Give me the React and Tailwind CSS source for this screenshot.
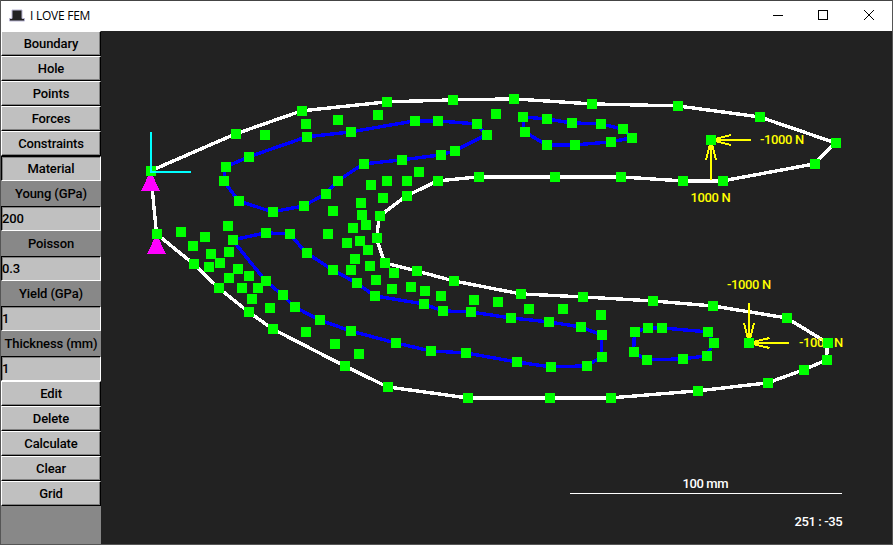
import React from 'react';

const boundary = [
  [151, 171], [236, 134], [302, 111], [387, 102], [453, 100], [514, 99], [592, 104], [678, 106], [760, 117],
  [836, 143], [815, 164], [723, 181], [683, 181], [621, 177], [555, 177], [479, 177], [438, 181], [407, 196],
  [380, 216], [377, 238], [385, 263], [417, 271], [454, 281], [521, 294], [583, 297], [653, 301], [713, 306],
  [787, 318], [828, 343], [827, 360], [804, 370], [768, 383], [698, 391], [611, 398], [550, 398], [468, 398],
  [388, 387], [345, 366], [273, 329], [249, 312], [219, 288], [194, 264], [157, 234],
];

const holes = [
  [
    [226, 167], [249, 157], [307, 137], [351, 132], [415, 121], [438, 121], [477, 124], [487, 135], [455, 151],
    [441, 155], [402, 160], [364, 164], [338, 181], [326, 194], [304, 206], [273, 212], [239, 201], [224, 181],
  ],
  [
    [523, 117], [547, 119], [572, 123], [601, 124], [623, 129], [632, 138], [611, 142], [575, 145], [547, 145],
    [525, 132],
  ],
  [
    [233, 240], [266, 233], [290, 234], [307, 253], [333, 270], [357, 283], [375, 296], [424, 304], [443, 311],
    [471, 312], [511, 318], [549, 322], [581, 327], [602, 335], [602, 357], [587, 366], [551, 367], [517, 362],
    [466, 353], [431, 351], [396, 343], [351, 331], [320, 320], [295, 307], [283, 295], [266, 281],
  ],
  [
    [635, 332], [648, 328], [662, 328], [708, 332], [714, 343], [707, 356], [683, 359], [647, 360], [634, 352],
  ],
];

const points = [
  [265, 135], [306, 124], [338, 120], [378, 115], [496, 114], [181, 232], [193, 246], [205, 237], [228, 226],
  [211, 254], [209, 267], [220, 263], [229, 252], [229, 278], [238, 269], [249, 276], [242, 288], [258, 288],
  [252, 299], [270, 308], [306, 332], [335, 344], [359, 354], [419, 172], [407, 181], [387, 181], [371, 185],
  [383, 198], [361, 203], [362, 215], [366, 225], [353, 228], [333, 211], [328, 234], [347, 243], [360, 241],
  [368, 250], [355, 259], [351, 270], [370, 266], [394, 273], [376, 280], [392, 289], [411, 287], [425, 291],
  [441, 296], [474, 300], [498, 302], [529, 309], [563, 309], [601, 315], [711, 140], [749, 343],
];

const labelFont = "font-['Roboto',sans-serif] text-[13px] font-medium tracking-[-0.12px]";

function Polygon({ nodes, color }) {
  return (
    <polygon
      points={nodes.map((n) => n.join(',')).join(' ')}
      transform="translate(-0.5 -0.1)"
      fill="none"
      stroke={color}
      strokeWidth="3.4"
      shapeRendering="crispEdges"
    />
  );
}

function Label({ x, y, width, color = '#ff0', children }) {
  return (
    <text x={x} y={y} textLength={width} fill={color} className={labelFont}>
      {children}
    </text>
  );
}

function Model() {
  return (
    <svg className="block h-full w-full" viewBox="101 31 791 513">
      <Polygon nodes={boundary} color="#fff" />
      {holes.map((h, i) => <Polygon key={i} nodes={h} color="#00f" />)}
      <path d="M150.5 171 160 191H141ZM156.500 234 166 254H147Z" fill="#f0f" shapeRendering="crispEdges" />
      <g stroke="#ff0" strokeWidth="2" fill="none" shapeRendering="crispEdges">
        <path d="M751 140H711M731 135L711 140L731 145" />
        <path d="M711 180V140M706 160L711 140L716 160" />
        <path d="M749 303V343M744 323L749 343L754 323" />
        <path d="M789 343H749M769.500 338L749 343L769.500 348" />
      </g>
      <Label x={760} y={144} width={44}>-1000 N</Label>
      <Label x={690.5} y={202} width={40}>1000 N</Label>
      <Label x={727} y={289} width={44}>-1000 N</Label>
      <Label x={799} y={347} width={44}>-1000 N</Label>
      {[...boundary, ...holes.flat(), ...points].map(([x, y], i) => (
        <rect key={i} x={x - 5} y={y - 5} width="10" height="10" fill="#0f0" />
      ))}
      <path d="M151 132V172H191" fill="none" stroke="#0ff" strokeWidth="2" />
      <Label x={682.5} y={488} width={46} color="#fff">100 mm</Label>
      <path d="M570 493.500H842" stroke="#fff" />
      <Label x={794.5} y={526} width={48} color="#fff">251 : -35</Label>
    </svg>
  );
}

const raised =
  'border-t-white border-l-white border-r-black border-b-black shadow-[inset_-1px_-1px_0_#808080]';
const sunken =
  'border-t-black border-l-black border-r-white border-b-white shadow-[inset_1px_1px_0_#808080]';

function Button({ pressed, children }) {
  return (
    <button className={`flex h-[25px] w-full items-center justify-center border bg-[#c0c0c0] tracking-[-0.12px] ${pressed ? sunken : raised}`}>
      {children}
    </button>
  );
}

function Field({ label, value }) {
  return (
    <div className="w-full">
      <div className="flex h-[25px] items-center justify-center whitespace-nowrap">{label}</div>
      <div className={`flex h-[25px] items-center border bg-[#c0c0c0] ${sunken}`}>{value}</div>
    </div>
  );
}

function TitleBar() {
  return (
    <header className="flex h-[31px] items-center justify-between border-t border-[#444] bg-white">
      <div className="flex items-center gap-[5px] pl-[8px]">
        <svg width="16" height="14" viewBox="0 0 16 14">
          <path d="M3 1H13V9.500H15.500V12H0.500V9.500H3Z" fill="#222" stroke="#b9b6d3" strokeWidth="1" />
        </svg>
        <span className="font-['Open_Sans',sans-serif] text-[12px] leading-[16px] tracking-[-0.25px] text-black">
          I LOVE FEM
        </span>
      </div>
      <svg width="138" height="30" viewBox="754 1 138 30" fill="none" stroke="#000" strokeWidth="1">
        <path d="M773 15.500H783" />
        <rect x="818.5" y="10.5" width="9" height="9" />
        <path d="M864 10L874 20M874 10L864 20" />
      </svg>
    </header>
  );
}

export default function App() {
  return (
    <div className="flex h-[545px] w-[893px] flex-col overflow-hidden border-r border-b border-l border-[#555] bg-[#222]">
      <TitleBar />
      <div className="flex min-h-0 flex-1">
        <aside className={`flex w-[100px] shrink-0 flex-col bg-[#888] text-black ${labelFont}`}>
          <Button>Boundary</Button>
          <Button>Hole</Button>
          <Button>Points</Button>
          <Button>Forces</Button>
          <Button>Constraints</Button>
          <Button pressed>Material</Button>
          <Field label="Young (GPa)" value="200" />
          <Field label="Poisson" value="0.3" />
          <Field label="Yield (GPa)" value="1" />
          <Field label="Thickness (mm)" value="1" />
          <Button>Edit</Button>
          <Button>Delete</Button>
          <Button>Calculate</Button>
          <Button>Clear</Button>
          <Button>Grid</Button>
        </aside>
        <main className="min-w-0 flex-1">
          <Model />
        </main>
      </div>
    </div>
  );
}
